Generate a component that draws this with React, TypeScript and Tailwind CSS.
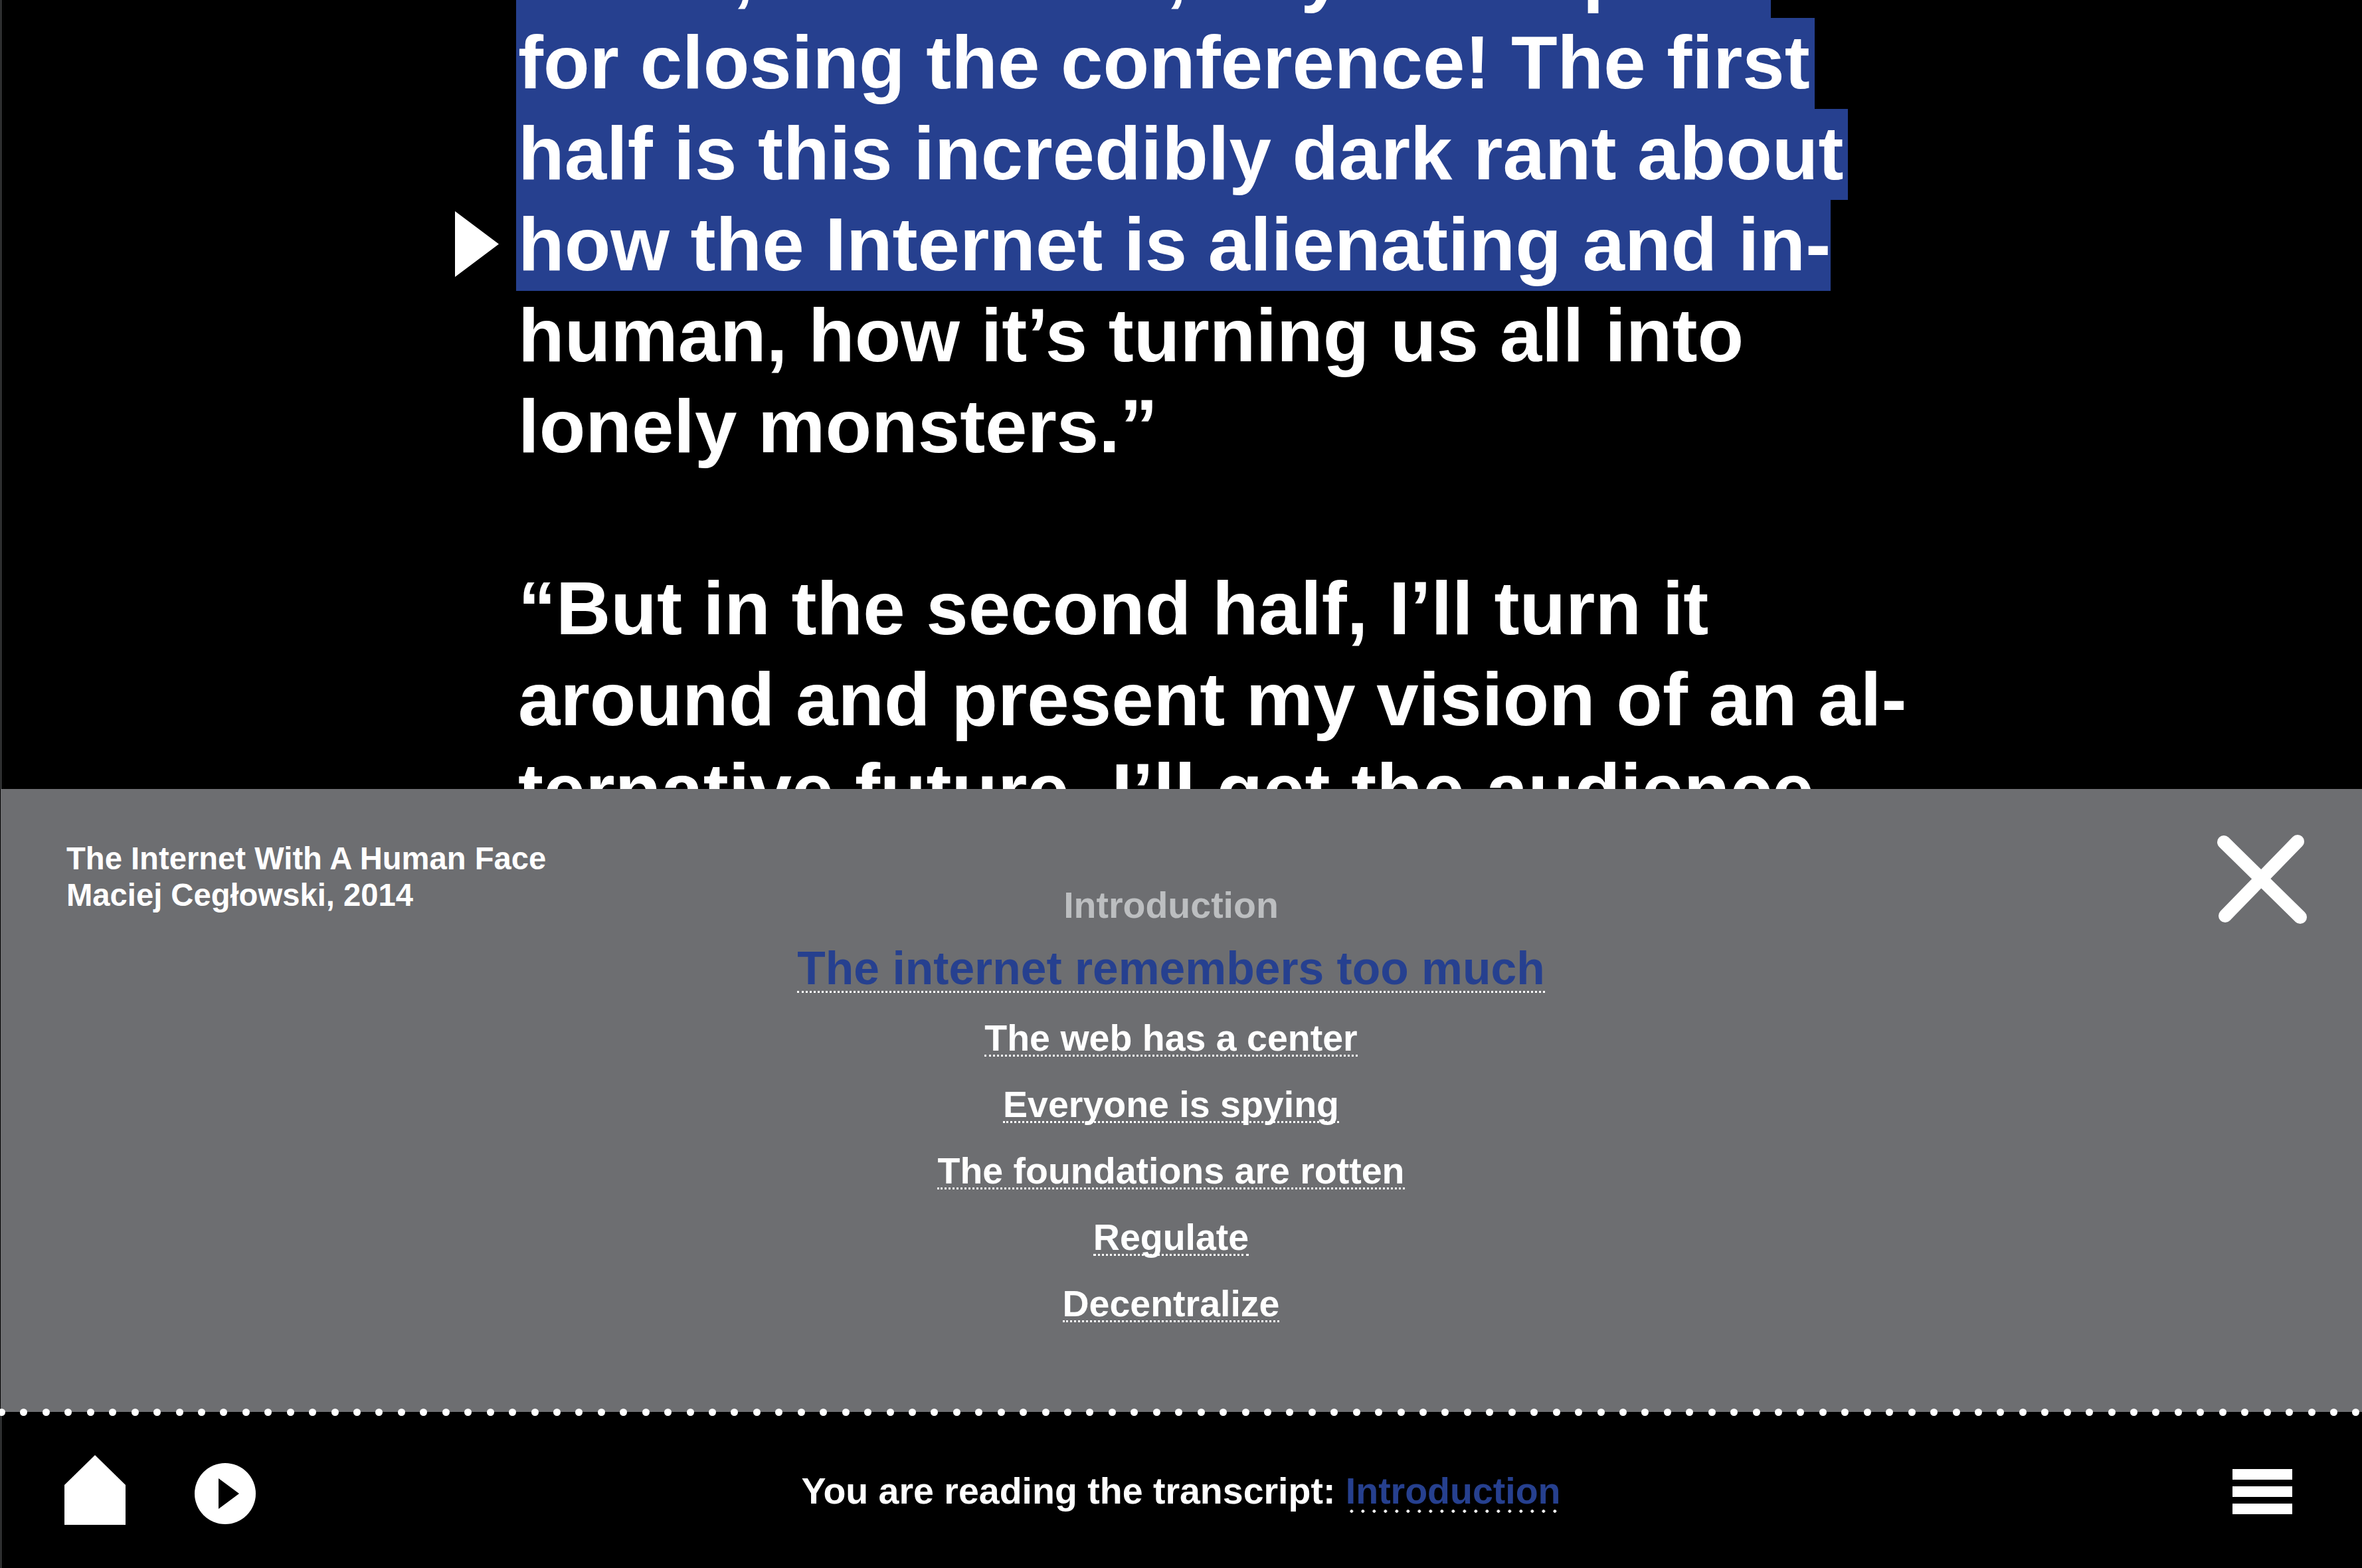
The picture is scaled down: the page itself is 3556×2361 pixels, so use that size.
const topLines = [
  { text: "“Marc, dear friend, boy had a pitch", pad: "pr-[11px]" },
  { text: "for closing the conference! The first", pad: "pr-[7px]" },
  { text: "half is this incredibly dark rant about", pad: "pr-[7px]" },
  { text: "how the Internet is alienating and in-", pad: "pr-0" },
];

const restLines = ["human, how it’s turning us all into", "lonely monsters.”"];

const secondPara = [
  "“But in the second half, I’ll turn it",
  "around and present my vision of an al-",
  "ternative future. I’ll get the audience",
];

const chapters = ["The web has a center", "Everyone is spying", "The foundations are rotten", "Regulate", "Decentralize"];

function Transcript() {
  return (
    <div className="relative h-[1188px] shrink-0 overflow-hidden pl-[775px]">
      <div className="mt-[-110px] text-[114px] leading-[137px] font-bold text-white whitespace-nowrap">
        {topLines.map((line) => (
          <div key={line.text} className={`w-fit pl-[3px] bg-[#26408f] ${line.pad}`}>
            <span className="relative top-[-2px]">{line.text}</span>
          </div>
        ))}
        {restLines.map((line) => (
          <div key={line} className="pl-[3px]">
            <span className="relative top-[-2px]">{line}</span>
          </div>
        ))}
        <div className="h-[137px]" />
        {secondPara.map((line) => (
          <div key={line} className="pl-[3px]">
            <span className="relative top-[-2px]">{line}</span>
          </div>
        ))}
      </div>
      <svg className="absolute left-[683px] top-[318px] w-[66px] h-[99px]" viewBox="0 0 66 99">
        <polygon points="0,0 66,49.5 0,99" fill="#fff" />
      </svg>
    </div>
  );
}

function ContentsPanel() {
  return (
    <div className="relative h-[938px] shrink-0 bg-[#6d6e71] text-white font-bold">
      <div className="absolute left-[98px] top-[77px] text-[47.2px] leading-[55px]">
        <div>The Internet With A Human Face</div>
        <div>Maciej Cegłowski, 2014</div>
      </div>
      <svg className="absolute right-[82px] top-[69px] w-[136px] h-[136px]" viewBox="0 0 136 136">
        <path d="M10 11 L125 124 M121 10 L12 122" stroke="#fff" strokeWidth="20" strokeLinecap="round" />
      </svg>
      <div className="flex flex-col items-center mr-[32px] pt-[142px]">
        <div className="text-[55.5px] leading-[66px] text-[#bcbec0]">Introduction</div>
        <a className="mt-[28px] text-[69.6px] leading-[68px] text-[#26408f] border-b-[3px] border-dotted border-white">
          The internet remembers too much
        </a>
        <div className="mt-[43px] flex flex-col items-center gap-[47px] text-[55.5px] leading-[50px]">
          {chapters.map((c) => (
            <a key={c} className="border-b-[3px] border-dotted border-white">
              {c}
            </a>
          ))}
        </div>
      </div>
    </div>
  );
}

function Footer() {
  return (
    <div className="relative flex-1 grid grid-cols-[1fr_auto_1fr] items-center bg-black pl-[95px] pr-[105px]">
      <div className="absolute left-[-2px] top-[-5px] flex gap-[22.45px]">
        {Array.from({ length: 107 }).map((_, i) => (
          <div key={i} className="w-[11px] h-[11px] shrink-0 rounded-full bg-white first:ml-[-3px]" />
        ))}
      </div>
      <div className="flex items-end gap-[104px]">
        <svg className="w-[92px] h-[105px]" viewBox="0 0 92 105">
          <polygon points="46,0 92,45 92,105 0,105 0,45" fill="#fff" />
        </svg>
        <svg className="w-[92px] h-[92px] mb-px" viewBox="0 0 92 92">
          <circle cx="46" cy="46" r="46" fill="#fff" />
          <polygon points="36,23 67,46 36,69" fill="#000" />
        </svg>
      </div>
      <div className="mt-[2px] ml-[8px] text-[55.5px] leading-[64px] font-bold text-white whitespace-nowrap">
        You are reading the transcript:{" "}
        <a className="pb-[2px] text-[#26408f] bg-[radial-gradient(circle,#fff_2px,transparent_2.5px)] bg-[length:17px_5px] bg-bottom bg-repeat-x">
          Introduction
        </a>
      </div>
      <div className="mt-[5px] flex flex-col gap-[10px] justify-self-end">
        <div className="w-[90px] h-[16px] bg-white" />
        <div className="w-[90px] h-[16px] bg-white" />
        <div className="w-[90px] h-[16px] bg-white" />
      </div>
    </div>
  );
}

export default function App() {
  return (
    <div className="h-[2361px] overflow-hidden bg-black pl-px font-['Liberation_Sans',Arial,sans-serif]">
      <div className="flex flex-col h-full border-l border-[#6d6e71]">
        <Transcript />
        <ContentsPanel />
        <Footer />
      </div>
    </div>
  );
}
